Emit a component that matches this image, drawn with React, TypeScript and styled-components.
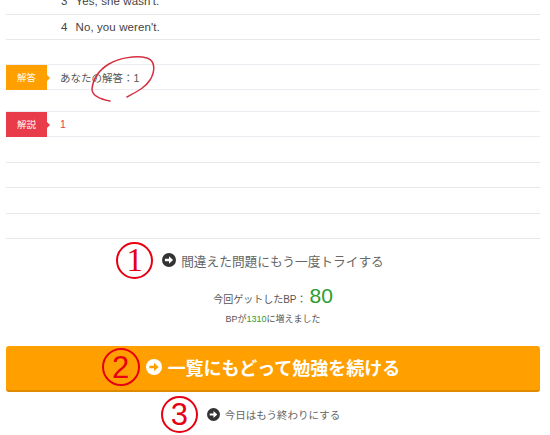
import React from "react";
import styled, { createGlobalStyle } from "styled-components";

const Global = createGlobalStyle`
  html, body { margin: 0; padding: 0; background: #fff; overflow: hidden; }
  body { font-family: "Liberation Sans", "Noto Sans CJK JP", sans-serif; color: #555; }
`;
const Page = styled.div`
  width: 534px; height: 435px; margin-left: 6px; overflow: hidden;
`;
const Choices = styled.div`margin-top: -11px;`;
const Choice = styled.div`
  height: 24.5px; border-bottom: 1px solid #e8e8e8; display: flex; align-items: center;
  padding-left: 55px; gap: 8px; font-size: 11.5px; color: #444; letter-spacing: 0.1px;
`;
const Block = styled.div<{ $top: number }>`
  position: relative; margin-top: ${p => p.$top}px; height: 24px;
  border-top: 1px solid #ececf2; border-bottom: 1px solid #ececf2;
  display: flex; align-items: center;
`;
const Tag = styled.div<{ $color: string }>`
  position: relative; width: 41px; height: 25px; background: ${p => p.$color}; color: #fff;
  font-size: 9.5px; display: flex; align-items: center; justify-content: center; flex-shrink: 0;
  &::after {
    content: ""; position: absolute; left: 100%; top: 10px;
    border-left: 3px solid ${p => p.$color}; border-top: 3px solid transparent; border-bottom: 3px solid transparent;
  }
`;
const BlockText = styled.span<{ $color: string }>`
  margin-left: 13px; font-size: 10.5px; color: ${p => p.$color};
`;
const Scribble = styled.svg`
  position: absolute; left: 85px; top: -8px; overflow: visible;
`;
const Empty = styled.div`height: 24px; border-bottom: 1px solid #e8e8e8;`;
const Blank = styled.div`height: 25px; border-bottom: 1px solid #e8e8e8;`;
const Lead = styled.div`
  display: flex; align-items: center; justify-content: center; height: 38px; margin-top: 2px;
`;
const Numeral = styled.div<{ $size: number; $sans?: boolean }>`
  width: ${p => p.$size}px; height: ${p => p.$size}px; border: 2px solid #e60012; border-radius: 50%;
  box-sizing: border-box; color: #e60012;
  font: ${p => (p.$sans ? '31px/1 "Liberation Sans", sans-serif' : '33px/1 "Liberation Serif", serif')};
  display: flex; align-items: center; justify-content: center; flex-shrink: 0;
`;
const LinkText = styled.span<{ $size: number; $color: string }>`
  font-size: ${p => p.$size}px; color: ${p => p.$color}; white-space: nowrap;
`;
const Arrow = styled.svg`flex-shrink: 0;`;
const Retry = styled(Lead)`padding-right: 46px;`;
const Spacer = styled.span<{ $w: number }>`width: ${p => p.$w}px; flex-shrink: 0;`;
const Score = styled.div`
  display: flex; justify-content: center; align-items: baseline; gap: 3px; height: 24px; margin-top: 5px;
  font-size: 10px; line-height: 24px; color: #555;
`;
const Points = styled.span`font-size: 21px; color: #2e9b2e;`;
const Note = styled.div`
  text-align: center; font-size: 9px; margin-top: 4px; line-height: 14px; color: #555;
`;
const Green = styled.span`color: #2e9b2e; font-weight: 400;`;
const BigButton = styled.div`
  box-sizing: border-box; margin-top: 20px; height: 46px; padding: 0 44px 2px 0; background: #ffa000; border-bottom: 2px solid #e08a00;
  border-radius: 3px; display: flex; align-items: center; justify-content: center;
`;
const ButtonText = styled.span`
  color: #fff; font-size: 18px; font-weight: 700; white-space: nowrap;
`;
const Finish = styled(Lead)`height: 44px; margin-top: 0; padding-right: 45px;`;

const ArrowIcon = ({ size, bg, fg }: { size: number; bg: string; fg: string }) => (
  <Arrow width={size} height={size} viewBox="0 0 24 24">
    <circle cx="12" cy="12" r="12" fill={bg} />
    <path d="M5 10h7V5.5l7 6.5-7 6.5V14H5z" fill={fg} />
  </Arrow>
);

export default function App() {
  return (
    <Page>
      <Global />
      <Choices>
        <Choice><span>3</span><span>Yes, she wasn't.</span></Choice>
        <Choice><span>4</span><span>No, you weren't.</span></Choice>
      </Choices>
      <Block $top={24}>
        <Tag $color="#ffa000">解答</Tag>
        <BlockText $color="#555">あなたの解答：1</BlockText>
        <Scribble width="70" height="50" viewBox="0 0 70 50">
          <path d="M19 44C8 42 1 38 1 32C2 22 8 13 18 7C28 1 45 -2 56 1C65 4 64 15 59 23C54 31 45 35 36 40" fill="none" stroke="#d4303f" strokeWidth="1.5" strokeLinecap="round" />
        </Scribble>
      </Block>
      <Block $top={21}>
        <Tag $color="#e83c4a">解説</Tag>
        <BlockText $color="#e83c4a">1</BlockText>
      </Block>
      <Blank />
      <Empty />
      <Blank />
      <Empty />
      <Retry>
        <Numeral $size={37}>1</Numeral>
        <Spacer $w={9} />
        <ArrowIcon size={14} bg="#333" fg="#fff" />
        <Spacer $w={5} />
        <LinkText $size={12.7} $color="#666">間違えた問題にもう一度トライする</LinkText>
      </Retry>
      <Score>今回ゲットしたBP：<Points>80</Points></Score>
      <Note>BPが<Green>1310</Green>に増えました</Note>
      <BigButton>
        <Numeral $size={38} $sans>2</Numeral>
        <Spacer $w={6} />
        <ArrowIcon size={16} bg="#fff" fg="#ffa000" />
        <Spacer $w={6} />
        <ButtonText>一覧にもどって勉強を続ける</ButtonText>
      </BigButton>
      <Finish>
        <Numeral $size={37} $sans>3</Numeral>
        <Spacer $w={9} />
        <ArrowIcon size={13} bg="#333" fg="#fff" />
        <Spacer $w={5} />
        <LinkText $size={10.5} $color="#666">今日はもう終わりにする</LinkText>
      </Finish>
    </Page>
  );
}
